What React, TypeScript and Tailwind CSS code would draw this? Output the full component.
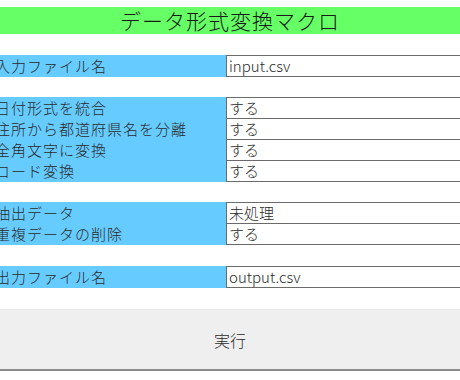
import React from "react";

const font = { fontFamily: '"Noto Sans CJK JP", "Noto Sans", sans-serif' };

type Row = { label: string; value: string };

function Group({ rows, className = "" }: { rows: Row[]; className?: string }) {
  return (
    <div className={"flex flex-col " + className}>
      {rows.map((r, i) => (
        <div key={i} className="grid grid-cols-[226px_1fr] h-[21px]">
          <div className="bg-[#66ccff] overflow-hidden whitespace-nowrap">
            <span className="block ml-[-5px] text-[15px] font-light leading-[21px] tracking-[1px] text-[#2a2a2a]">{r.label}</span>
          </div>
          <div className="border-l border-t border-[#6b6b6b] bg-white pl-[2px] text-[15px] font-light leading-[20px] text-[#2a2a2a] whitespace-nowrap overflow-hidden">
            {r.value}
          </div>
        </div>
      ))}
      <div className="grid grid-cols-[226px_1fr] h-[1px]">
        <div className="bg-[#66ccff]" />
        <div className="bg-[#6b6b6b]" />
      </div>
    </div>
  );
}

export default function App() {
  return (
    <div style={font} className="w-[460px] h-[380px] bg-white overflow-hidden pt-[7px]">
      <div className="h-[27px] bg-[#66ff66] flex items-center justify-center text-[21px] font-light text-[#1a1a1a] tracking-[1px]">
        データ形式変換マクロ
      </div>
      <Group className="mt-[21px]" rows={[{ label: "入力ファイル名", value: "input.csv" }]} />
      <Group
        className="mt-[20px]"
        rows={[
          { label: "日付形式を統合", value: "する" },
          { label: "住所から都道府県名を分離", value: "する" },
          { label: "全角文字に変換", value: "する" },
          { label: "コード変換", value: "する" },
        ]}
      />
      <Group
        className="mt-[20px]"
        rows={[
          { label: "抽出データ", value: "未処理" },
          { label: "重複データの削除", value: "する" },
        ]}
      />
      <Group className="mt-[21px]" rows={[{ label: "出力ファイル名", value: "output.csv" }]} />
      <div className="mt-[21px] h-[62px] bg-[#efefef] border-t border-[#e6e6e6] border-b-2 border-b-[#8a8a8a] flex items-center justify-center text-[16px] font-light text-[#2a2a2a]">
        実行
      </div>
    </div>
  );
}
